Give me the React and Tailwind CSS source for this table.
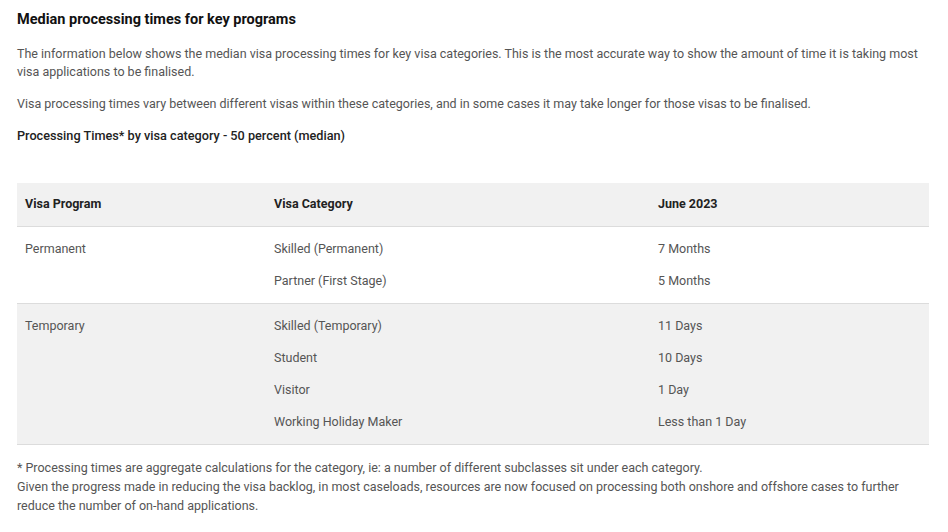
export default function App() {
  const rows = [
    {
      program: "Permanent",
      shaded: false,
      items: [
        ["Skilled (Permanent)", "7 Months"],
        ["Partner (First Stage)", "5 Months"],
      ],
    },
    {
      program: "Temporary",
      shaded: true,
      items: [
        ["Skilled (Temporary)", "11 Days"],
        ["Student", "10 Days"],
        ["Visitor", "1 Day"],
        ["Working Holiday Maker", "Less than 1 Day"],
      ],
    },
  ];

  return (
    <div className="w-[948px] h-[532px] bg-white px-[17px] pt-[11px] font-['Roboto',sans-serif] text-[12.5px] text-[#555] overflow-hidden">
      <h2 className="text-[14.5px] font-bold text-[#111] leading-[18px]">
        Median processing times for key programs
      </h2>
      <p className="mt-[16px] leading-[18px] pr-[10px]">
        The information below shows the median visa processing times for key visa categories. This is the most accurate way to show the amount of time it is taking most visa applications to be finalised.
      </p>
      <p className="mt-[14px] leading-[18px]">
        Visa processing times vary between different visas within these categories, and in some cases it may take longer for those visas to be finalised.
      </p>
      <p className="mt-[14px] leading-[18px] text-[12.7px] font-medium text-[#222]">
        Processing Times* by visa category - 50 percent (median)
      </p>

      <div className="mt-[38px] w-[912px]">
        <div className="grid grid-cols-[249px_384px_1fr] h-[44px] items-center bg-[#f1f1f1] border-b border-[#dcdcdc] font-bold text-[#222]">
          <div className="px-2">Visa Program</div>
          <div className="px-2">Visa Category</div>
          <div className="px-2">June 2023</div>
        </div>
        {rows.map((r) => (
          <div
            key={r.program}
            className={`grid grid-cols-[249px_384px_1fr] py-[6px] border-b border-[#dcdcdc] ${r.shaded ? "bg-[#f1f1f1]" : "bg-white"}`}
          >
            <div className="px-2 h-[32px] flex items-center">{r.program}</div>
            <div>
              {r.items.map(([cat]) => (
                <div key={cat} className="px-2 h-[32px] flex items-center">{cat}</div>
              ))}
            </div>
            <div>
              {r.items.map(([cat, time]) => (
                <div key={cat} className="px-2 h-[32px] flex items-center">{time}</div>
              ))}
            </div>
          </div>
        ))}
      </div>

      <div className="mt-[13px] leading-[19px]">
        <p>* Processing times are aggregate calculations for the category, ie: a number of different subclasses sit under each category.</p>
        <p className="pr-[10px]">
          Given the progress made in reducing the visa backlog, in most caseloads, resources are now focused on processing both onshore and offshore cases to further reduce the number of on-hand applications.
        </p>
      </div>
    </div>
  );
}
